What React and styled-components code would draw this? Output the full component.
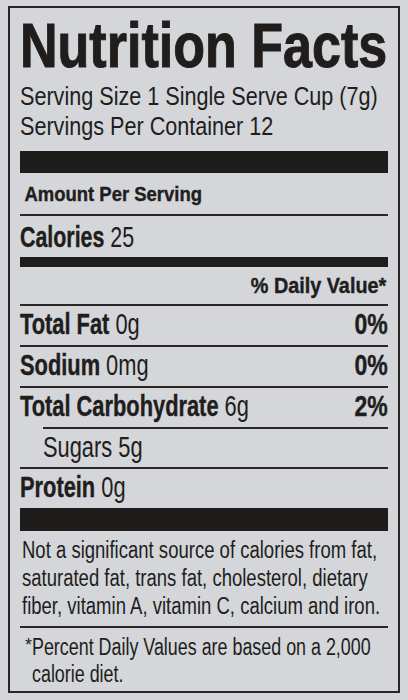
import styled, { createGlobalStyle } from "styled-components";

const GlobalStyle = createGlobalStyle`
    html, body {
        margin: 0;
        padding: 0;
        background: #d4d6d9;
    }
    body {
        font-family: "Liberation Sans", Arial, sans-serif;
        color: #211d1d;
    }
    b {
        -webkit-text-stroke: 0.4px currentColor;
    }
`;

const nutrients = [
    { name: "Total Fat", amount: "0g", dv: "0%" },
    { name: "Sodium", amount: "0mg", dv: "0%" },
    { name: "Total Carbohydrate", amount: "6g", dv: "2%" },
    { name: "Sugars", amount: "5g", sub: true },
    { name: "Protein", amount: "0g" },
];

const footnote = [
    "Not a significant source of calories from fat,",
    "saturated fat, trans fat, cholesterol, dietary",
    "fiber, vitamin A, vitamin C, calcium and iron.",
];

export default function App(){
    return(
        <>
            <GlobalStyle />
            <Label>
                <Title>Nutrition Facts</Title>
                <Serving>
                    <div>Serving Size 1 Single Serve Cup (7g)</div>
                    <div>Servings Per Container 12</div>
                </Serving>
                <Bar $height={22} $top={10} />
                <AmountRow>Amount Per Serving</AmountRow>
                <Rule />
                <CaloriesRow><b>Calories</b> 25</CaloriesRow>
                <Bar $height={10} />
                <DailyRow>% Daily Value*</DailyRow>
                {nutrients.map((item,index)=>{return(
                    <div key={index}>
                        <Rule $indent={item.sub} />
                        <NutrientRow $sub={item.sub}>
                            <Name>{item.sub ? item.name : <b>{item.name}</b>} {item.amount}</Name>
                            {item.dv ? <Percent>{item.dv}</Percent> : null}
                        </NutrientRow>
                    </div>
                )})}
                <Bar $height={23} />
                <Footnote>
                    {footnote.map((line,index)=>{return(<FootLine key={index}>{line}</FootLine>)})}
                </Footnote>
                <Rule />
                <Note>
                    <Star>*</Star>
                    <div>
                        <NoteLine>Percent Daily Values are based on a 2,000</NoteLine>
                        <NoteLine>calorie diet.</NoteLine>
                    </div>
                </Note>
            </Label>
        </>
    );
}

const Label = styled.div`
    box-sizing: border-box;
    margin: 6px 8px 0 8px;
    width: 392px;
    height: 687px;
    border: 2px solid #2a2626;
    padding: 7px 10px 0 10px;
    overflow: hidden;
`;

const Title = styled.div`
    font-weight: 700;
    font-size: 63px;
    line-height: 60px;
    white-space: nowrap;
    -webkit-text-stroke: 1px currentColor;
    transform: scaleX(0.826);
    transform-origin: left center;
`;

const Serving = styled.div`
    margin-top: 6px;
    font-size: 26.5px;
    line-height: 30px;
    white-space: nowrap;
    transform: scaleX(0.815);
    transform-origin: left center;
`;

const Bar = styled.div`
    margin-top: ${props=>props.$top || 0}px;
    height: ${props=>props.$height}px;
    background: #1f1c1c;
`;

const Rule = styled.div`
    height: 2px;
    background: #2a2626;
    margin-left: ${props=>props.$indent?'23px':'0'};
`;

const AmountRow = styled.div`
    height: 40px;
    padding: 1px 0 0 5px;
    font-weight: 700;
    font-size: 21px;
    line-height: 40px;
    white-space: nowrap;
    -webkit-text-stroke: 0.4px currentColor;
    transform: scaleX(0.88);
    transform-origin: left center;
`;

const CaloriesRow = styled.div`
    height: 41px;
    font-size: 29.5px;
    line-height: 41px;
    white-space: nowrap;
    transform: scaleX(0.725);
    transform-origin: left center;
`;

const DailyRow = styled.div`
    height: 37px;
    text-align: right;
    padding-right: 2px;
    font-weight: 700;
    font-size: 22px;
    line-height: 37px;
    white-space: nowrap;
    -webkit-text-stroke: 0.4px currentColor;
    transform: scaleX(0.9);
    transform-origin: right center;
`;

const NutrientRow = styled.div`
    display: flex;
    justify-content: space-between;
    height: ${props=>props.$sub?'38px':'39px'};
    padding-left: ${props=>props.$sub?'23px':'0'};
    font-size: 29.5px;
    line-height: 35px;
    white-space: nowrap;
`;

const Name = styled.span`
    display: inline-block;
    transform: scaleX(0.74);
    transform-origin: left center;
`;

const Percent = styled.span`
    display: inline-block;
    font-weight: 700;
    -webkit-text-stroke: 0.4px currentColor;
    transform: scaleX(0.78);
    transform-origin: right center;
`;

const Footnote = styled.div`
    margin: 5px 0 5px 2px;
`;

const FootLine = styled.div`
    font-size: 23px;
    line-height: 28.2px;
    white-space: nowrap;
    transform: scaleX(0.805);
    transform-origin: left center;
`;

const Note = styled.div`
    display: flex;
    margin-top: 6.6px;
    padding-left: 5px;
`;

const Star = styled.span`
    width: 8px;
    font-size: 18px;
    line-height: 22px;
`;

const NoteLine = styled.div`
    font-size: 23.5px;
    line-height: 26.5px;
    white-space: nowrap;
    transform: scaleX(0.761);
    transform-origin: left center;
`;
